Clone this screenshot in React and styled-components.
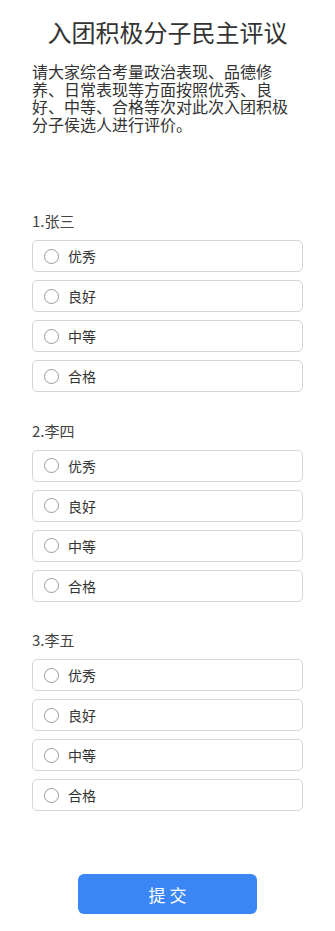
import React, { useState } from "react";
import styled, { createGlobalStyle } from "styled-components";

const GlobalStyle = createGlobalStyle`
  html, body {
    margin: 0;
    padding: 0;
    background: #fff;
  }
  body {
    font-family: "Noto Sans CJK SC", "Noto Sans", "Liberation Sans", sans-serif;
    color: #333;
  }
`;

const Page = styled.div`
  display: flex;
  flex-direction: column;
  padding: 16px 32px 17px;
`;

const Title = styled.h1`
  margin: 0;
  font-size: 24px;
  line-height: 32px;
  font-weight: 400;
  text-align: center;
  color: #333;
`;

const Intro = styled.p`
  margin: 15px 0 0;
  font-size: 16px;
  line-height: 17.5px;
  color: #333;
`;

const Questions = styled.div`
  display: flex;
  flex-direction: column;
  gap: 28.5px;
  margin-top: 78px;
`;

const Question = styled.section`
  display: flex;
  flex-direction: column;
`;

const Name = styled.div`
  font-size: 15px;
  line-height: 20px;
  color: #444;
  margin-bottom: 9px;
`;

const Options = styled.div`
  display: flex;
  flex-direction: column;
  gap: 8px;
`;

const Option = styled.label`
  box-sizing: border-box;
  height: 32px;
  display: flex;
  align-items: center;
  gap: 9px;
  padding: 0 11px;
  border: 1px solid #d6d6d6;
  border-radius: 5px;
  background: #fff;
  cursor: pointer;
`;

const Radio = styled.span`
  box-sizing: border-box;
  flex: none;
  width: 15px;
  height: 15px;
  border-radius: 50%;
  border: 1px solid ${(p) => (p.$checked ? "#3a86f4" : "#9a9a9a")};
  display: flex;
  align-items: center;
  justify-content: center;

  &::after {
    content: "";
    width: 7px;
    height: 7px;
    border-radius: 50%;
    background: #3a86f4;
    display: ${(p) => (p.$checked ? "block" : "none")};
  }
`;

const OptionText = styled.span`
  font-size: 14px;
  line-height: 18px;
  color: #333;
`;

const Footer = styled.div`
  display: flex;
  justify-content: center;
  margin-top: 63px;
`;

const SubmitButton = styled.button`
  width: 179px;
  height: 40px;
  border: none;
  border-radius: 6px;
  background: #3a86f4;
  color: #fff;
  font-family: inherit;
  font-size: 17px;
  cursor: pointer;
`;

const people = ["张三", "李四", "李五"];
const grades = ["优秀", "良好", "中等", "合格"];

const App = () => {
  const [answers, setAnswers] = useState({});

  return (
    <>
      <GlobalStyle />
      <Page>
        <Title>入团积极分子民主评议</Title>
        <Intro>
          请大家综合考量政治表现、品德修养、日常表现等方面按照优秀、良好、中等、合格等次对此次入团积极分子侯选人进行评价。
        </Intro>
        <Questions>
          {people.map((name, i) => (
            <Question key={name}>
              <Name>{i + 1}.{name}</Name>
              <Options>
                {grades.map((g) => (
                  <Option
                    key={g}
                    onClick={() => setAnswers((a) => ({ ...a, [name]: g }))}
                  >
                    <Radio $checked={answers[name] === g} />
                    <OptionText>{g}</OptionText>
                  </Option>
                ))}
              </Options>
            </Question>
          ))}
        </Questions>
        <Footer>
          <SubmitButton>提 交</SubmitButton>
        </Footer>
      </Page>
    </>
  );
};

export default App;
